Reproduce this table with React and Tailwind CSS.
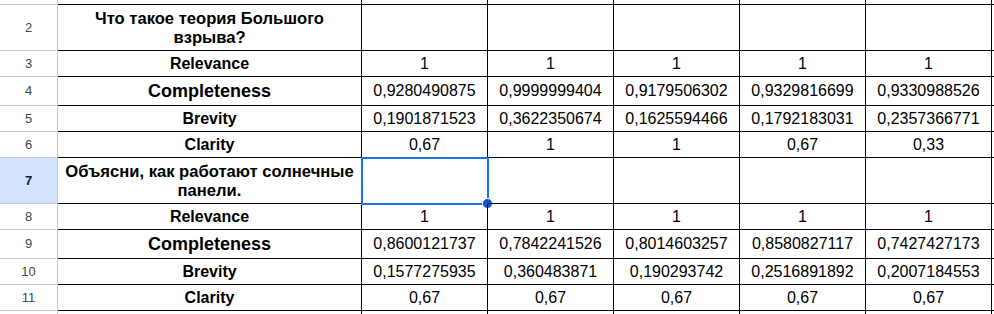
import React from 'react';

const rows = [
  { n: 1, h: 'h-[5px]', label: '', vals: ['', '', '', '', ''] },
  { n: 2, h: 'h-[46px]', label: 'Что такое теория Большого взрыва?', kind: 'q', vals: ['', '', '', '', ''] },
  { n: 3, h: 'h-[26px]', label: 'Relevance', vals: ['1', '1', '1', '1', '1'] },
  { n: 4, h: 'h-[29px]', label: 'Completeness', kind: 'big', vals: ['0,9280490875', '0,9999999404', '0,9179506302', '0,9329816699', '0,9330988526'] },
  { n: 5, h: 'h-[26px]', label: 'Brevity', vals: ['0,1901871523', '0,3622350674', '0,1625594466', '0,1792183031', '0,2357366771'] },
  { n: 6, h: 'h-[26px]', label: 'Clarity', vals: ['0,67', '1', '1', '0,67', '0,33'] },
  { n: 7, h: 'h-[46px]', label: 'Объясни, как работают солнечные панели.', kind: 'q', selected: true, vals: ['', '', '', '', ''] },
  { n: 8, h: 'h-[26px]', label: 'Relevance', vals: ['1', '1', '1', '1', '1'] },
  { n: 9, h: 'h-[29px]', label: 'Completeness', kind: 'big', vals: ['0,8600121737', '0,7842241526', '0,8014603257', '0,8580827117', '0,7427427173'] },
  { n: 10, h: 'h-[26px]', label: 'Brevity', vals: ['0,1577275935', '0,360483871', '0,190293742', '0,2516891892', '0,2007184553'] },
  { n: 11, h: 'h-[26px]', label: 'Clarity', vals: ['0,67', '0,67', '0,67', '0,67', '0,67'] },
  { n: 12, h: 'h-[20px]', label: '', vals: ['', '', '', '', ''] },
];

function Row({ row }) {
  const labelSize =
    row.kind === 'big' ? 'text-[18px]' : row.kind === 'q' ? 'text-[16.6px] leading-[19px]' : 'text-[16px]';
  return (
    <div className={`flex ${row.h} shrink-0`}>
      <div
        className={`w-[58px] shrink-0 flex items-center justify-center border-r border-b border-[#c4c7c5] text-[13px] ${
          row.selected ? 'bg-[#d3e3fd] text-[#041e49] font-bold' : 'bg-white text-[#444746]'
        }`}
      >
        {row.n > 1 && row.n < 12 ? row.n : ''}
      </div>
      <div
        className={`w-[304px] shrink-0 flex items-center justify-center px-[2px] font-bold text-black border-r border-b border-black overflow-hidden ${labelSize}`}
      >
        <p className="w-full text-center">{row.label}</p>
      </div>
      {row.vals.map((v, i) => (
        <div
          key={i}
          className="relative w-[126px] shrink-0 flex items-center justify-center text-[16px] text-black border-r border-b border-black"
        >
          {v}
          {row.selected && i === 0 && (
            <div className="absolute left-[-1px] top-[-1px] w-[128px] h-[48px] border-2 border-[#1a73e8]">
              <span className="absolute right-[-6px] bottom-[-6px] w-[11px] h-[11px] rounded-full bg-[#0b57d0] border border-white" />
            </div>
          )}
        </div>
      ))}
      <div className="flex-1 border-b border-black" />
    </div>
  );
}

export default function App() {
  return (
    <div className="w-[994px] h-[314px] overflow-hidden bg-white font-['Liberation_Sans',Arial,sans-serif]">
      {rows.map((r) => (
        <Row key={r.n} row={r} />
      ))}
    </div>
  );
}
